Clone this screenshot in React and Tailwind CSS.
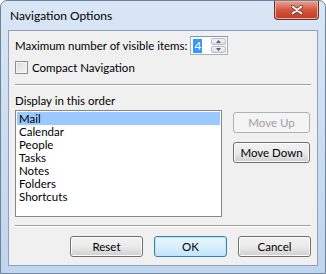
import { useState } from "react";

const items = ["Mail", "Calendar", "People", "Tasks", "Notes", "Folders", "Shortcuts"];

const Button = ({ label, primary }) => (
  <button
    className={`flex h-[21px] w-[73px] items-center justify-center rounded-[3px] border ${
      primary
        ? "border-[#3c7fb1] bg-gradient-to-b from-[#eaf6fd] via-[#d9f0fc] to-[#bee6fd] shadow-[inset_0_0_0_1px_#c0e4f8]"
        : "border-[#707070] bg-gradient-to-b from-[#f2f2f2] via-[#ebebeb] to-[#cfcfcf] shadow-[inset_0_0_0_1px_#fcfcfc]"
    }`}
  >
    {label}
  </button>
);

const Separator = () => (
  <div className="border-t border-b border-t-[#a0a0a0] border-b-white" />
);

export default function App() {
  const [selected, setSelected] = useState(0);
  const [compact, setCompact] = useState(false);

  return (
    <div
      className="flex h-[274px] w-[326px] flex-col rounded-t-[7px] border border-[#6e8299] bg-gradient-to-b from-[#d9e6f5] to-[#c0d5ee] text-[11.5px] text-black"
      style={{ fontFamily: 'Lato, "Noto Sans", sans-serif' }}
    >
      {/* title bar */}
      <div className="flex h-[29px] shrink-0 items-start justify-between">
        <span className="mt-[6px] ml-[9px] text-[12px]">Navigation Options</span>
        <button className="mr-[6px] flex h-[19px] w-[45px] items-center justify-center rounded-b-[4px] border border-t-0 border-[#6b2f2b] bg-gradient-to-b from-[#e8a493] via-[#d4553e] to-[#c13a24] shadow-[inset_0_0_0_1px_#eab3a6]">
          <svg width="12" height="10" viewBox="0 0 12 10">
            <path d="M1.5 1.5 L10.5 8.5 M10.5 1.5 L1.5 8.5" stroke="#5a2a22" strokeWidth="3.4" strokeLinecap="round" />
            <path d="M1.5 1.5 L10.5 8.5 M10.5 1.5 L1.5 8.5" stroke="#ffffff" strokeWidth="2" strokeLinecap="round" />
          </svg>
        </button>
      </div>

      {/* client area */}
      <div className="mx-[7px] mb-[7px] flex flex-1 flex-col border border-[#8da2bd] bg-[#f0f0f0] pt-[5px] pr-[6px] pl-[6px]">
        <div className="flex h-[19px] items-center">
          <span>Maximum number of visible items:</span>
          <div className="ml-[3px] flex h-[19px] w-[38px] border border-[#abadb3] border-t-[#7a9cc4] bg-white">
            <div className="flex flex-1 items-center pl-[2px]">
              <span className="bg-[#3399ff] px-[1px] leading-[14px] text-white">4</span>
            </div>
            <div className="my-[1px] mr-[1px] flex w-[15px] flex-col gap-[1px]">
              <div className="flex flex-1 items-center justify-center rounded-[2px] border border-[#b6bcc6] bg-gradient-to-b from-[#f3f3f3] to-[#dcdfe4]">
                <svg width="5" height="3" viewBox="0 0 5 3">
                  <path d="M0 3 L2.5 0 L5 3 Z" fill="#4d6185" />
                </svg>
              </div>
              <div className="flex flex-1 items-center justify-center rounded-[2px] border border-[#b6bcc6] bg-gradient-to-b from-[#f3f3f3] to-[#dcdfe4]">
                <svg width="5" height="3" viewBox="0 0 5 3">
                  <path d="M0 0 L2.5 3 L5 0 Z" fill="#4d6185" />
                </svg>
              </div>
            </div>
          </div>
        </div>

        <label className="mt-[6px] flex h-[13px] items-center gap-[4px]" onClick={() => setCompact(!compact)}>
          <span className="flex h-[13px] w-[13px] items-center justify-center border border-[#8e8f8f] bg-gradient-to-br from-[#dcdcdc] to-[#f6f6f6] shadow-[inset_0_0_0_1px_#f4f4f4]">
            {compact && <span className="text-[10px] leading-none">✓</span>}
          </span>
          <span className="leading-[13px]">Compact Navigation</span>
        </label>

        <div className="mt-[10px]">
          <Separator />
        </div>

        <div className="mt-[7px] leading-[15px]">Display in this order</div>

        <div className="mt-[2px] flex">
          <div className="flex h-[107px] w-[207px] flex-col border border-[#828790] bg-white p-[1px]">
            {items.map((item, i) => (
              <div
                key={item}
                onClick={() => setSelected(i)}
                className={`h-[13px] pl-[2px] leading-[13px] ${
                  selected === i ? "bg-[#99c9ff]" : ""
                }`}
              >
                {item}
              </div>
            ))}
          </div>
          <div className="ml-[11px] flex flex-col gap-[9px] pt-[2px]">
            <button className="flex h-[21px] w-[77px] items-center justify-center rounded-[3px] border border-[#adb2b5] bg-[#f4f4f4] text-[#a0a0a0]">
              Move Up
            </button>
            <button className="flex h-[21px] w-[77px] items-center justify-center rounded-[3px] border border-[#707070] bg-gradient-to-b from-[#f2f2f2] via-[#ebebeb] to-[#cfcfcf] shadow-[inset_0_0_0_1px_#fcfcfc]">
              Move Down
            </button>
          </div>
        </div>

        <div className="mt-[8px]">
          <Separator />
        </div>

        <div className="mt-[9px] flex justify-end gap-[11px]">
          <Button label="Reset" />
          <Button label="OK" primary />
          <Button label="Cancel" />
        </div>
      </div>
    </div>
  );
}
